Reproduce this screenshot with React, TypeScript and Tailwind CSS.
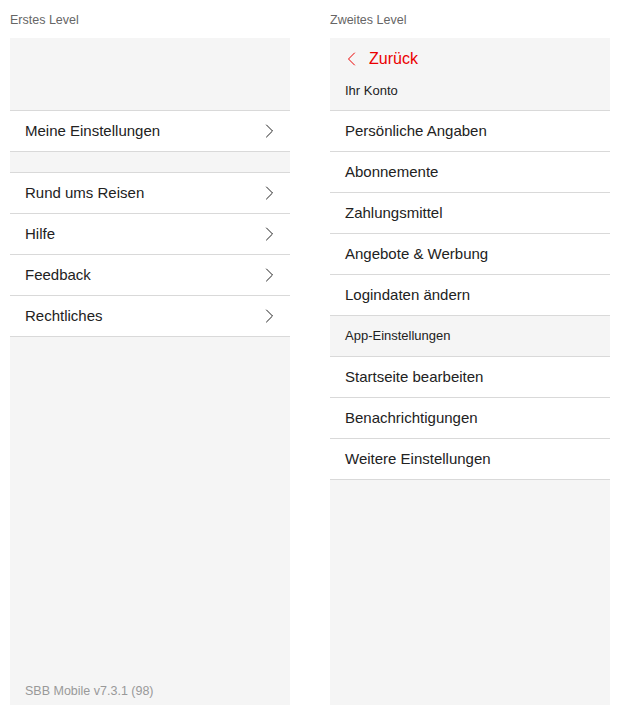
const font = { fontFamily: '"Liberation Sans", Arial, sans-serif' };

function Chevron({ left = false, className = "" }: { left?: boolean; className?: string }) {
    return (
        <svg width="9" height="14" viewBox="0 0 9 14" fill="none" className={className}>
            <path
                d={left ? "M7.5 1 L1.5 7 L7.5 13" : "M1.5 1 L7.5 7 L1.5 13"}
                stroke="currentColor"
                strokeWidth="1"
                strokeLinecap="round"
                strokeLinejoin="round"
            />
        </svg>
    );
}

function Row({ label, arrow = true }: { label: string; arrow?: boolean }) {
    return (
        <div className="flex h-[41px] items-center justify-between border-b border-[#d9d9d9] bg-white pl-[15px] pr-[16px]">
            <span className="text-[15px] text-[#222]">{label}</span>
            {arrow && <Chevron className="text-[#222]" />}
        </div>
    );
}

function FirstLevel() {
    return (
        <div className="flex w-[280px] flex-col">
            <div className="h-[38px] pt-[13px] text-[12.5px] leading-[15px] text-[#666]">Erstes Level</div>
            <div className="flex flex-1 flex-col bg-[#f5f5f5]">
                <div className="h-[72px]" />
                <div className="border-t border-[#d9d9d9]">
                    <Row label="Meine Einstellungen" />
                </div>
                <div className="h-[20px]" />
                <div className="border-t border-[#d9d9d9]">
                    <Row label="Rund ums Reisen" />
                    <Row label="Hilfe" />
                    <Row label="Feedback" />
                    <Row label="Rechtliches" />
                </div>
                <div className="flex-1" />
                <div className="pb-[4px] pl-[15px] text-[12.5px] text-[#999]">SBB Mobile v7.3.1 (98)</div>
            </div>
        </div>
    );
}

function SecondLevel() {
    return (
        <div className="flex w-[280px] flex-col">
            <div className="h-[38px] pt-[13px] text-[12.5px] leading-[15px] text-[#666]">Zweites Level</div>
            <div className="flex flex-1 flex-col bg-[#f5f5f5]">
                <div className="flex h-[72px] flex-col px-[15px]">
                    <div className="mt-[9px] flex items-center gap-[13px] text-[#eb0000]">
                        <Chevron left className="ml-[2px]" />
                        <span className="text-[16px]">Zurück</span>
                    </div>
                    <div className="mt-[10px] text-[13px] text-[#222]">Ihr Konto</div>
                </div>
                <div className="border-t border-[#d9d9d9]">
                    <Row label="Persönliche Angaben" arrow={false} />
                    <Row label="Abonnemente" arrow={false} />
                    <Row label="Zahlungsmittel" arrow={false} />
                    <Row label="Angebote & Werbung" arrow={false} />
                    <Row label="Logindaten ändern" arrow={false} />
                    <div className="flex h-[41px] items-center border-b border-[#d9d9d9] bg-[#f5f5f5] pl-[15px] text-[13px] text-[#222]">
                        App-Einstellungen
                    </div>
                    <Row label="Startseite bearbeiten" arrow={false} />
                    <Row label="Benachrichtigungen" arrow={false} />
                    <Row label="Weitere Einstellungen" arrow={false} />
                </div>
            </div>
        </div>
    );
}

export default function App() {
    return (
        <div style={font} className="flex h-[715px] w-[620px] gap-[40px] bg-white px-[10px] pb-[10px]">
            <FirstLevel />
            <SecondLevel />
        </div>
    );
}
